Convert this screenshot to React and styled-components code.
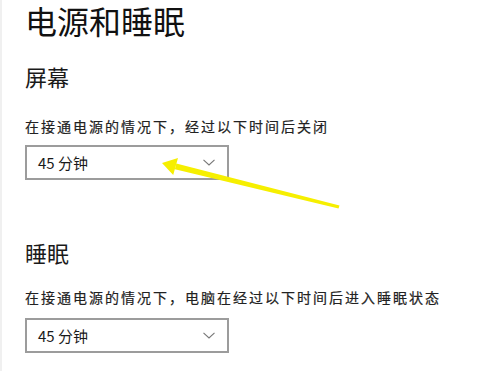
import React from "react";
import styled, { createGlobalStyle } from "styled-components";

const Global = createGlobalStyle`
  html, body { margin: 0; padding: 0; background: #fff; }
  body { font-family: "Noto Sans CJK SC", "Noto Sans", sans-serif; color: #111; }
`;

const Page = styled.div`
  position: relative;
  width: 498px;
  height: 371px;
  box-sizing: border-box;
  padding: 0 0 0 23px;
  border-left: 2px solid #f0f0f0;
  overflow: hidden;
`;

const Title = styled.h1`
  margin: 0;
  font-size: 32px;
  font-weight: 400;
  line-height: 40px;
  color: #111;
`;

const SectionTitle = styled.h2`
  margin: ${(p) => p.$top}px 0 0;
  font-size: 22px;
  font-weight: 400;
  line-height: 22px;
  color: #1a1a1a;
`;

const Desc = styled.p`
  margin: ${(p) => p.$top}px 0 0;
  font-size: 14px;
  line-height: 14px;
  letter-spacing: ${(p) => p.$ls}px;
  color: #222;
  -webkit-text-stroke: 0.2px #222;
`;

const Select = styled.div`
  margin-top: ${(p) => p.$top}px;
  box-sizing: border-box;
  width: 204px;
  height: 35px;
  border: 2px solid #9c9c9c;
  display: flex;
  align-items: center;
  justify-content: space-between;
  padding: 0 12px 0 11px;
  font-size: 15px;
  color: #1a1a1a;
`;

const Chevron = () => (
  <svg width="12" height="7" viewBox="0 0 12 7">
    <path d="M0.5 0.8 L6 6 L11.5 0.8" fill="none" stroke="#777" strokeWidth="1.1" />
  </svg>
);

const Arrow = styled.svg`
  position: absolute;
  left: 0;
  top: 0;
  pointer-events: none;
`;

export default function App() {
  return (
    <>
      <Global />
      <Page>
        <Title>电源和睡眠</Title>
        <SectionTitle $top={25}>屏幕</SectionTitle>
        <Desc $top={32} $ls={2}>在接通电源的情况下，经过以下时间后关闭</Desc>
        <Select $top={12}>
          <span>45 分钟</span>
          <Chevron />
        </Select>
        <SectionTitle $top={61}>睡眠</SectionTitle>
        <Desc $top={27} $ls={2}>在接通电源的情况下，电脑在经过以下时间后进入睡眠状态</Desc>
        <Select $top={14}>
          <span>45 分钟</span>
          <Chevron />
        </Select>
        <Arrow width="498" height="371" viewBox="0 0 498 371">
          <polygon points="172.9,169.3 174.3,163.5 337.5,205.6 336.5,208.4" fill="#f6ef00" />
          <polygon points="160,163 176,158 173.6,166.4 171.2,175" fill="#f6ef00" />
        </Arrow>
      </Page>
    </>
  );
}
